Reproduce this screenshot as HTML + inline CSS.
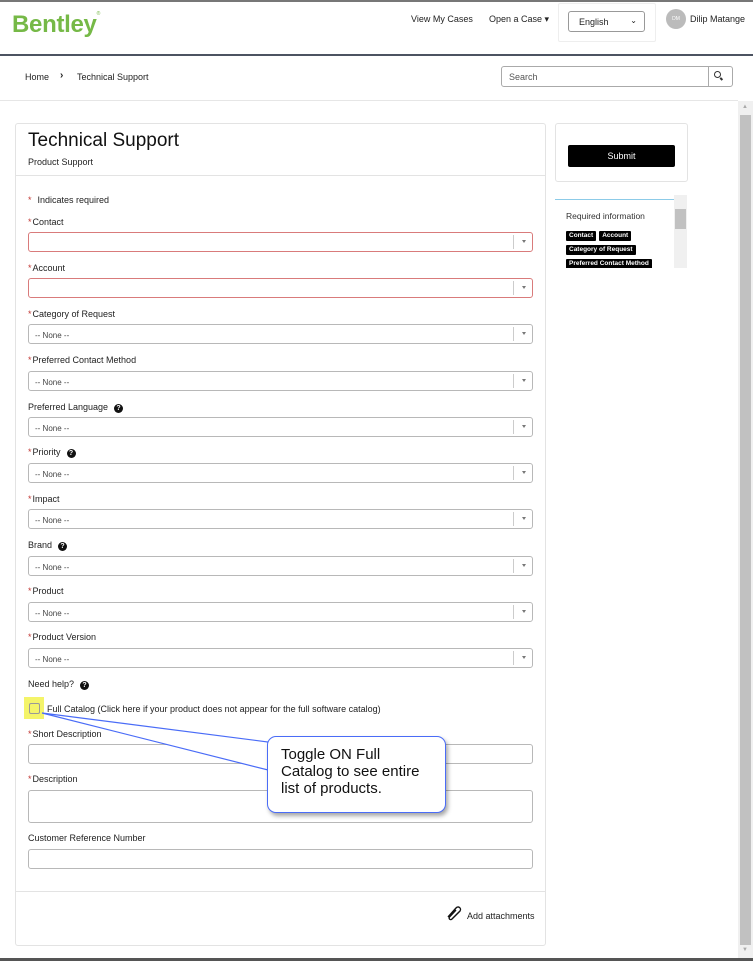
<!DOCTYPE html>
<html><head><meta charset="utf-8"><style>
*{box-sizing:border-box;margin:0;padding:0}
body{width:753px;height:961px;position:relative;overflow:hidden;background:#fff;font-family:"Liberation Sans",Arial,sans-serif;color:#222}
.a{position:absolute}
.lbl{position:absolute;left:28px;font-size:9px;color:#222}
.st{color:#c23934;font-size:9px;margin-right:1px}
.inp{position:absolute;left:28px;width:505px;height:20px;border:1px solid #b8b8b8;border-radius:3px;font-size:8px;color:#444;padding:6px 0 0 6px;background:#fff}
.inp.r{border-color:#d97b7b}
.inp .sep{position:absolute;right:18px;top:2px;bottom:2px;border-left:1px solid #ccc}
.inp .ar{position:absolute;right:6px;top:7px;width:0;height:0;border-left:2.5px solid transparent;border-right:2.5px solid transparent;border-top:3px solid #777}
.q{display:inline-block;width:9px;height:9px;border-radius:50%;background:#111;color:#fff;font-size:7px;font-weight:bold;text-align:center;line-height:9px;margin-left:6px;vertical-align:0}
.row{position:absolute;left:0;white-space:nowrap}
.tag{display:inline-block;background:#000;color:#fff;font-size:6.5px;font-weight:bold;padding:1px 3px;height:10px;line-height:8px;border-radius:1px;margin-right:3px}
</style></head><body>
<div class="a" style="left:0;top:0;width:753px;height:2px;background:#777"></div>
<div class="a" style="left:12px;top:11px;font-size:24px;color:#76b947;font-weight:bold;letter-spacing:-0.3px">Bentley<span style="font-size:5px;vertical-align:top;font-weight:normal">®</span></div>
<div class="a" style="left:411px;top:14px;font-size:9px">View My Cases</div>
<div class="a" style="left:489px;top:14px;font-size:9px">Open a Case ▾</div>
<div class="a" style="left:558px;top:3px;width:98px;height:39px;border:1px solid #eee;border-radius:2px"></div>
<div class="a" style="left:568px;top:11px;width:77px;height:21px;border:1px solid #999;border-radius:3px;font-size:9px;padding:5px 0 0 10px">English<span style="position:absolute;right:7px;top:4px;font-size:8px">⌄</span></div>
<div class="a" style="left:666px;top:9px;width:20px;height:20px;border-radius:50%;background:#bbb;color:#fff;font-size:5px;text-align:center;line-height:20px">DM</div>
<div class="a" style="left:690px;top:14px;font-size:9px">Dilip Matange</div>
<div class="a" style="left:0;top:54px;width:753px;height:2px;background:#4c5361"></div>
<div class="a" style="left:25px;top:72px;font-size:9px">Home</div>
<div class="a" style="left:60px;top:70px;font-size:10px;font-weight:bold">›</div>
<div class="a" style="left:77px;top:72px;font-size:9px">Technical Support</div>
<div class="a" style="left:501px;top:66px;width:232px;height:21px;border:1px solid #aaa;border-radius:3px;font-size:9px;color:#555;padding:5px 0 0 7px">Search<div class="a" style="left:206px;top:0;width:1px;height:19px;background:#aaa"></div><div class="a" style="left:212px;top:4px;width:7px;height:7px;border:1.5px solid #333;border-radius:50%"></div><div class="a" style="left:218px;top:11px;width:3px;height:1.5px;background:#333;transform:rotate(45deg)"></div></div>
<div class="a" style="left:0;top:100px;width:738px;height:1px;background:#e6e6e6"></div>
<div class="a" style="left:738px;top:101px;width:15px;height:857px;background:#f0f0f0"></div>
<div class="a" style="left:740px;top:115px;width:11px;height:830px;background:#c1c1c1"></div>
<div class="a" style="left:742px;top:104px;font-size:6px;color:#aaa">▲</div>
<div class="a" style="left:742px;top:947px;font-size:6px;color:#aaa">▼</div>
<div class="a" style="left:0;top:958px;width:753px;height:3px;background:#555"></div>
<div class="a" style="left:15px;top:123px;width:531px;height:823px;border:1px solid #e3e3e3;border-radius:3px"></div>
<div class="a" style="left:28px;top:130px;font-size:19px;color:#111">Technical Support</div>
<div class="a" style="left:28px;top:157px;font-size:9px">Product Support</div>
<div class="a" style="left:16px;top:175px;width:529px;height:1px;background:#e3e3e3"></div>
<div class="lbl" style="top:195px"><span class="st">*</span>&nbsp; Indicates required</div>
<div class="lbl" style="top:217px"><span class="st">*</span>Contact</div>
<div class="inp r" style="top:232px"><span class="sep"></span><span class="ar"></span></div>
<div class="lbl" style="top:263px"><span class="st">*</span>Account</div>
<div class="inp r" style="top:278px"><span class="sep"></span><span class="ar"></span></div>
<div class="lbl" style="top:309px"><span class="st">*</span>Category of Request</div>
<div class="inp" style="top:324px">-- None --<span class="sep"></span><span class="ar"></span></div>
<div class="lbl" style="top:355px"><span class="st">*</span>Preferred Contact Method</div>
<div class="inp" style="top:371px">-- None --<span class="sep"></span><span class="ar"></span></div>
<div class="lbl" style="top:402px">Preferred Language<span class="q">?</span></div>
<div class="inp" style="top:417px">-- None --<span class="sep"></span><span class="ar"></span></div>
<div class="lbl" style="top:447px"><span class="st">*</span>Priority<span class="q">?</span></div>
<div class="inp" style="top:463px">-- None --<span class="sep"></span><span class="ar"></span></div>
<div class="lbl" style="top:494px"><span class="st">*</span>Impact</div>
<div class="inp" style="top:509px">-- None --<span class="sep"></span><span class="ar"></span></div>
<div class="lbl" style="top:540px">Brand<span class="q">?</span></div>
<div class="inp" style="top:556px">-- None --<span class="sep"></span><span class="ar"></span></div>
<div class="lbl" style="top:586px"><span class="st">*</span>Product</div>
<div class="inp" style="top:602px">-- None --<span class="sep"></span><span class="ar"></span></div>
<div class="lbl" style="top:632px"><span class="st">*</span>Product Version</div>
<div class="inp" style="top:648px">-- None --<span class="sep"></span><span class="ar"></span></div>
<div class="lbl" style="top:679px">Need help?<span class="q">?</span></div>
<div class="a" style="left:24px;top:697px;width:20px;height:22px;background:#f4f469"></div>
<div class="a" style="left:29px;top:703px;width:11px;height:11px;border:1px solid #999;border-radius:2px"></div>
<div class="a" style="left:47px;top:704px;font-size:9px">Full Catalog (Click here if your product does not appear for the full software catalog)</div>
<div class="lbl" style="top:729px"><span class="st">*</span>Short Description</div>
<div class="inp" style="top:744px"></div>
<div class="lbl" style="top:774px"><span class="st">*</span>Description</div>
<div class="inp" style="top:790px;height:33px"></div>
<div class="lbl" style="top:833px">Customer Reference Number</div>
<div class="inp" style="top:849px"></div>
<div class="a" style="left:16px;top:891px;width:529px;height:1px;background:#e3e3e3"></div>
<svg class="a" style="left:445px;top:905px" width="18" height="16" viewBox="0 0 18 16"><path d="M3 12 L11 3 a2.5 2.5 0 0 1 4 3 L7 14 a1.6 1.6 0 0 1 -2.5 -2 L11 5" fill="none" stroke="#111" stroke-width="1.4"/></svg>
<div class="a" style="left:467px;top:911px;font-size:9px">Add attachments</div>
<svg class="a" style="left:0;top:0" width="753" height="961"><polygon points="42,713 268,742 268,770" fill="#fff" stroke="#4a6cf7" stroke-width="1.2"/></svg>
<div class="a" style="left:267px;top:736px;width:179px;height:77px;border:1.5px solid #4a6cf7;border-radius:9px;background:#fff;box-shadow:2px 3px 4px rgba(0,0,0,.35);font-size:15px;line-height:17px;padding:9px 0 0 13px;color:#111">Toggle ON Full<br>Catalog to see entire<br>list of products.</div>
<div class="a" style="left:555px;top:123px;width:133px;height:59px;border:1px solid #e3e3e3;border-radius:3px"></div>
<div class="a" style="left:568px;top:145px;width:107px;height:22px;background:#000;border-radius:2px;color:#fff;font-size:9px;text-align:center;line-height:22px">Submit</div>
<div class="a" style="left:555px;top:199px;width:119px;height:1px;background:#8ccbe8"></div>
<div class="a" style="left:674px;top:195px;width:13px;height:73px;background:#f0f0f0"></div>
<div class="a" style="left:675px;top:209px;width:11px;height:20px;background:#c1c1c1"></div>
<div class="a" style="left:566px;top:211px;font-size:8.5px;color:#333">Required information</div>
<div class="a" style="left:566px;top:224px;width:108px;height:44px;overflow:hidden">
<div class="row" style="top:0"><span class="tag">Contact</span><span class="tag">Account</span></div>
<div class="row" style="top:14px"><span class="tag">Category of Request</span></div>
<div class="row" style="top:28px"><span class="tag">Preferred Contact Method</span></div>
<div class="row" style="top:42px"><span class="tag">Priority</span><span class="tag">Impact</span></div>
</div>
</body></html>
